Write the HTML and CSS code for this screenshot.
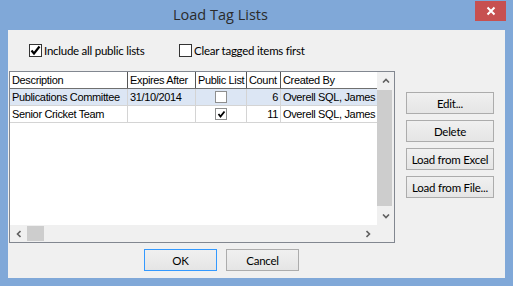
FILE: index.html
```html
<!DOCTYPE html>
<html lang="en">
<head>
    <meta charset="UTF-8">
    <title>Load Tag Lists</title>
    <link rel="stylesheet" href="styles.css">
</head>
<body>
    <div class="window">
        <div class="titlebar">
            <span class="title">Load Tag Lists</span>
            <div class="close">
                <svg width="10" height="10" viewBox="0 0 10 10"><path d="M1.5 1.5 L8.5 8.5 M8.5 1.5 L1.5 8.5" stroke="#fff" stroke-width="2"/></svg>
            </div>
        </div>
        <div class="client">
            <div class="options">
                <label class="opt first">
                    <span class="box"><svg width="11" height="11" viewBox="0 0 11 11"><path d="M1.5 5.5 L4 8.5 L9.5 1.5" fill="none" stroke="#000" stroke-width="2.2"/></svg></span>
                    Include all public lists
                </label>
                <label class="opt">
                    <span class="box"></span>
                    Clear tagged items first
                </label>
            </div>
            <div class="main">
                <div class="grid">
                    <div class="view">
                        <div class="row head">
                            <div class="cell c-desc">Description</div>
                            <div class="cell c-exp">Expires After</div>
                            <div class="cell c-pub">Public List</div>
                            <div class="cell c-count">Count</div>
                            <div class="cell c-by">Created By</div>
                        </div>
                        <div class="row sel">
                            <div class="cell c-desc">Publications Committee</div>
                            <div class="cell c-exp">31/10/2014</div>
                            <div class="cell c-pub"><span class="cbox"></span></div>
                            <div class="cell c-count num">6</div>
                            <div class="cell c-by">Overell SQL, James</div>
                        </div>
                        <div class="row">
                            <div class="cell c-desc">Senior Cricket Team</div>
                            <div class="cell c-exp"></div>
                            <div class="cell c-pub"><span class="cbox"><svg width="9" height="9" viewBox="0 0 9 9"><path d="M1.5 4 L3.5 6.5 L7.5 1.5" fill="none" stroke="#000" stroke-width="1.8"/></svg></span></div>
                            <div class="cell c-count num">11</div>
                            <div class="cell c-by">Overell SQL, James</div>
                        </div>
                    </div>
                    <div class="vscroll">
                        <div class="arrow"><svg width="8" height="5" viewBox="0 0 8 5"><path d="M1 4.5 L4 1.5 L7 4.5" fill="none" stroke="#606060" stroke-width="1.6"/></svg></div>
                        <div class="track"><div class="thumb"></div></div>
                        <div class="arrow"><svg width="8" height="5" viewBox="0 0 8 5"><path d="M1 0.5 L4 3.5 L7 0.5" fill="none" stroke="#606060" stroke-width="1.6"/></svg></div>
                    </div>
                    <div class="hscroll">
                        <div class="arrow"><svg width="5" height="8" viewBox="0 0 5 8"><path d="M4.5 1 L1.5 4 L4.5 7" fill="none" stroke="#606060" stroke-width="1.6"/></svg></div>
                        <div class="thumb"></div>
                        <div class="htrack"></div>
                        <div class="arrow"><svg width="5" height="8" viewBox="0 0 5 8"><path d="M0.5 1 L3.5 4 L0.5 7" fill="none" stroke="#606060" stroke-width="1.6"/></svg></div>
                    </div>
                    <div class="corner"></div>
                </div>
                <div class="side">
                    <button class="btn side-btn">Edit...</button>
                    <button class="btn side-btn">Delete</button>
                    <button class="btn side-btn">Load from Excel</button>
                    <button class="btn side-btn">Load from File...</button>
                </div>
            </div>
            <div class="footer">
                <button class="btn foot-btn default">OK</button>
                <button class="btn foot-btn">Cancel</button>
            </div>
        </div>
    </div>
</body>
</html>
```

FILE: styles.css
```css
* {
    box-sizing: border-box;
}
body {
    margin: 0;
    background: #fff;
    font-family: Lato, "Open Sans", sans-serif;
}
.window {
    width: 513px;
    height: 286px;
    background: #80a8d8;
    display: flex;
    flex-direction: column;
}
.titlebar {
    height: 30px;
    display: flex;
    align-items: flex-start;
}
.title {
    flex: 1;
    padding-left: 173px;
    line-height: 30px;
    font-family: "Open Sans", sans-serif;
    font-size: 14.5px;
    color: #2b2b2b;
}
.close {
    width: 31px;
    height: 20px;
    margin-top: 1px;
    margin-right: 7px;
    background: #c75050;
    display: flex;
    align-items: center;
    justify-content: center;
}
.client {
    flex: 1;
    margin: 0 8px 8px;
    background: #f0f0f0;
    padding-top: 14px;
    display: flex;
    flex-direction: column;
}
.options {
    display: flex;
    height: 13px;
    align-items: center;
    padding-left: 21px;
    font-size: 11.5px;
    letter-spacing: -0.25px;
    color: #000;
}
.opt {
    display: flex;
    align-items: center;
    gap: 2px;
    white-space: nowrap;
}
.opt.first {
    width: 150px;
}
.box {
    width: 13px;
    height: 13px;
    border: 1px solid #333;
    background: #fff;
    display: flex;
    align-items: center;
    justify-content: center;
}
.main {
    display: flex;
    margin-top: 14px;
}
.grid {
    margin-left: 1px;
    width: 386px;
    height: 172px;
    border: 1px solid #828790;
    background: #fff;
    display: grid;
    grid-template-columns: 367px 17px;
    grid-template-rows: 153px 17px;
}
.view {
    overflow: hidden;
    font-family: "Liberation Sans", Arial, sans-serif;
    font-size: 11px;
    letter-spacing: -0.35px;
    color: #000;
}
.row {
    display: flex;
    height: 17px;
    border-bottom: 1px solid #d4d4d4;
}
.cell {
    padding: 0 2px;
    line-height: 16px;
    border-right: 1px solid #d4d4d4;
    white-space: nowrap;
    overflow: hidden;
}
.head {
    border-bottom-color: #6f6f6f;
}
.head .cell {
    border-right-color: #555;
}
.sel {
    background: #dce6f4;
}
.c-desc { width: 118px; }
.c-exp { width: 68px; }
.c-pub {
    width: 51px;
    display: flex;
    justify-content: center;
    align-items: center;
}
.head .c-pub { display: block; }
.c-count { width: 34px; }
.c-by { width: 96px; border-right: none; }
.head .c-by { border-right: none; }
.num { text-align: right; }
.cbox {
    width: 12px;
    height: 12px;
    border: 1px solid #8e8f8f;
    background: #fff;
    display: flex;
    align-items: center;
    justify-content: center;
}
.vscroll {
    background: #f0f0f0;
    display: flex;
    flex-direction: column;
}
.vscroll .arrow {
    height: 17px;
    display: flex;
    align-items: center;
    justify-content: center;
}
.track {
    flex: 1;
    padding-top: 1px;
}
.vscroll .thumb {
    width: 15px;
    height: 116px;
    background: #cdcdcd;
}
.hscroll {
    background: #f0f0f0;
    display: flex;
}
.hscroll .arrow {
    width: 17px;
    display: flex;
    align-items: center;
    justify-content: center;
}
.hscroll .thumb {
    width: 17px;
    height: 15px;
    margin-top: 1px;
    background: #cdcdcd;
}
.htrack {
    flex: 1;
}
.corner {
    background: #f0f0f0;
}
.btn {
    font-family: Lato, "Open Sans", sans-serif;
    font-size: 11.5px;
    letter-spacing: -0.25px;
    color: #000;
    border: 1px solid #acacac;
    background: linear-gradient(#f0f0f0, #e5e5e5);
    padding: 0;
    height: 22px;
    white-space: nowrap;
}
.side {
    margin-left: 11px;
    padding-top: 21px;
    display: flex;
    flex-direction: column;
    gap: 6px;
}
.side-btn {
    width: 88px;
}
.footer {
    margin-top: 6px;
    padding-left: 136px;
    display: flex;
    gap: 9px;
}
.foot-btn {
    width: 73px;
}
.default {
    border-color: #3399ff;
}
```
